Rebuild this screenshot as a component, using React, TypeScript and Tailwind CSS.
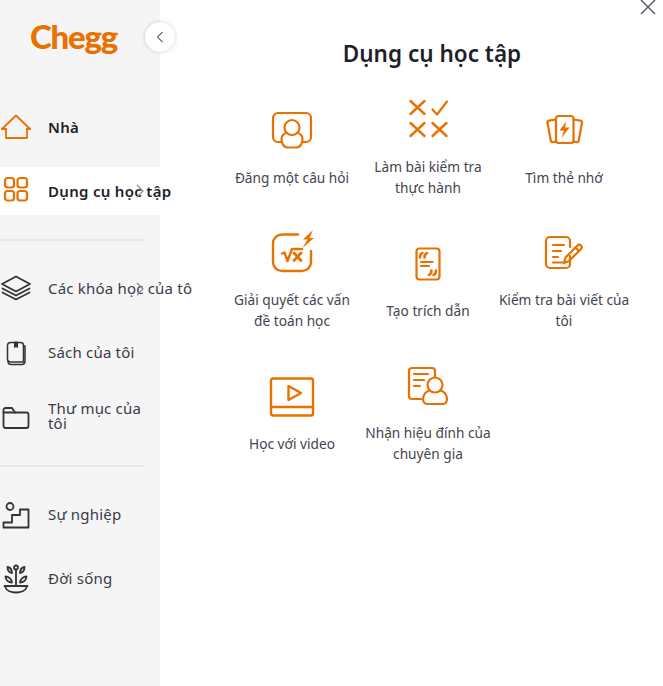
import React from "react";

const O = "#e87100";
const D = "#333333";

type SP = { children: React.ReactNode; c?: string };
const NavSvg = ({ children, c = D }: SP) => (
  <svg viewBox="0 0 32 32" width="32" height="32" fill="none" stroke={c} strokeWidth="1.8" strokeLinecap="round" strokeLinejoin="round" className="shrink-0">
    {children}
  </svg>
);
const BigSvg = ({ children }: { children: React.ReactNode }) => (
  <svg viewBox="0 0 48 40" width="48" height="40" fill="none" stroke={O} strokeWidth="2.2" strokeLinecap="round" strokeLinejoin="round" className="overflow-visible">
    {children}
  </svg>
);

const Chevron = () => (
  <svg width="8" height="14" viewBox="0 0 8 14" fill="none" stroke="#8a8a8a" strokeWidth="1.2" className="absolute left-[136px] top-1/2 -translate-y-1/2">
    <path d="M1 1l6 6-6 6" />
  </svg>
);

const navTop = [
  {
    label: "Nhà",
    bold: true,
    icon: (
      <NavSvg c={O}>
        <path d="M2 18 16 4.500 30 18" />
        <path d="M6 18v9h21v-9" />
        <path d="M2 18h4M27 18h3" />
      </NavSvg>
    ),
  },
  {
    label: "Dụng cụ học tập",
    bold: true,
    active: true,
    chevron: true,
    icon: (
      <NavSvg c={O}>
        <rect x="5" y="3" width="9" height="9.500" rx="2.500" strokeWidth="2.200" />
        <rect x="17.500" y="3" width="9.500" height="9.500" rx="2.500" strokeWidth="2.200" />
        <rect x="5" y="16" width="9" height="9.500" rx="2.500" strokeWidth="2.200" />
        <rect x="17.500" y="16" width="9.500" height="9.500" rx="2.500" strokeWidth="2.200" />
      </NavSvg>
    ),
  },
];

const navMid = [
  {
    label: "Các khóa học của tôi",
    chevron: true,
    nowrap: true,
    icon: (
      <NavSvg>
        <path d="M16 3.500 2 11 16 18.500 30 11z" />
        <path d="M2.500 15.500 16 22.500l13.500-7" />
        <path d="M2.500 19.500 16 26.500l13.500-7" />
      </NavSvg>
    ),
  },
  {
    label: "Sách của tôi",
    icon: (
      <NavSvg>
        <path d="M11 5.500h9.500a3 3 0 0 1 3 3V25H10.500a3 3 0 0 1-3-3V8.500a3 3 0 0 1 3.500-3z" strokeWidth="1.500" />
        <path d="M23.500 9h1.500v15.500a3 3 0 0 1-3 3H11a3 3 0 0 1-3-3" strokeWidth="1.500" />
        <path d="M14.500 5.500v5l1.500-1 1.500 1v-5z" fill={D} strokeWidth="1" />
      </NavSvg>
    ),
  },
  {
    label: "Thư mục của tôi",
    wrap: true,
    icon: (
      <NavSvg>
        <path d="M3.500 12V9a2 2 0 0 1 2-2h6.500l3 4.500h11.500a2 2 0 0 1 2 2V25a2 2 0 0 1-2 2H5.500a2 2 0 0 1-2-2z" />
        <path d="M3.500 11.500H15" />
      </NavSvg>
    ),
  },
];

const navBottom = [
  {
    label: "Sự nghiệp",
    icon: (
      <NavSvg>
        <circle cx="10" cy="7.500" r="3.500" />
        <path d="M3.500 28.500V23.500H12V16h8V10.500h8.500v18z" />
      </NavSvg>
    ),
  },
  {
    label: "Đời sống",
    icon: (
      <NavSvg>
        <circle cx="16" cy="4.500" r="2" />
        <path d="M16 7v15" />
        <path d="M7.500 4c2.500.5 4.500 3 4.500 6-2.500-.5-4.500-3-4.500-6zM24.500 4c-2.500.5-4.500 3-4.500 6 2.500-.5 4.500-3 4.500-6z" />
        <path d="M5.500 13.500c3 0 6 2.500 6.500 6-3.500 0-6.500-2.500-6.500-6zM26.500 13.500c-3 0-6 2.500-6.500 6 3.500 0 6.500-2.500 6.500-6z" />
        <path d="M4.500 23h23" />
        <path d="M5.500 24.500c1 3 5.500 5 10.500 5s9.500-2 10.500-5" />
      </NavSvg>
    ),
  },
];

type Nav = { label: string; icon: React.ReactNode; bold?: boolean; active?: boolean; chevron?: boolean; nowrap?: boolean; wrap?: boolean };

const NavRow = ({ item }: { item: Nav }) => (
  <div className={`relative flex h-12 w-[192px] items-center gap-4 overflow-hidden ${item.active ? "bg-white" : ""}`}>
    {item.icon}
    <span
      className={`leading-[15px] ${item.bold ? "text-[15px] tracking-[0.3px] font-semibold text-[#1f1f2b]" : "pb-0.5 text-[15px] tracking-[0.2px] text-[#3a3a48]"} ${item.nowrap ? "whitespace-nowrap" : ""} ${item.wrap ? "w-[100px]" : ""}`}
    >
      {item.label}
    </span>
    {item.chevron ? <Chevron /> : null}
  </div>
);

const tools = [
  {
    label: "Đăng một câu hỏi",
    icon: (
      <BigSvg>
        <path d="M14 31H10a5 5 0 0 1-5-5V7a5 5 0 0 1 5-5h28a5 5 0 0 1 5 5v19a5 5 0 0 1-5 5h-4" />
        <circle cx="24" cy="16.500" r="7.500" />
        <path d="M18 22c-3 1-4.500 3.500-4.500 6.500 0 4 2.500 8 6 8h9c3.500 0 6-4 6-8 0-3-1.500-5.500-4.500-6.500" />
      </BigSvg>
    ),
  },
  {
    label: "Làm bài kiểm tra thực hành",
    two: true,
    icon: (
      <BigSvg>
        <g strokeWidth="2.400">
          <path d="M6.500 1l14 13M20.500 1l-14 13" />
          <path d="M28.500 9.500l4.500 5L43 1.500" strokeWidth="2.200" />
          <path d="M6.500 23l14 13M20.500 23l-14 13" />
          <path d="M28.500 23l14 13M42.500 23l-14 13" />
        </g>
      </BigSvg>
    ),
  },
  {
    label: "Tìm thẻ nhớ",
    icon: (
      <BigSvg>
        <rect x="16" y="5" width="17.500" height="27" rx="2.500" />
        <path d="M16 8.500l-7 1.200c-1 .2-1.700 1-1.500 2l3.300 18c.2 1 1.200 1.700 2.200 1.500l3-.5" />
        <path d="M33.500 8.500l7 1.200c1 .2 1.700 1 1.500 2l-3.300 18c-.2 1-1.200 1.700-2.200 1.500l-3-.5" />
        <path d="M26.500 10l-7 9.500h4.500l-2.500 7.500 8-10.500h-4.500l1.500-6.500z" fill={O} stroke="none" />
      </BigSvg>
    ),
  },
  {
    label: "Giải quyết các vấn đề toán học",
    two: true,
    icon: (
      <BigSvg>
        <path d="M30 1.500H14a9 9 0 0 0-9 9V29a9 9 0 0 0 9 9h20a9 9 0 0 0 9-9V18" strokeWidth="2.400" />
        <path d="M14 20.500l2.500-1 3 8.500 4.500-12h10" strokeWidth="2.400" />
        <path d="M26 20l7 7.500M33 20l-7 7.500" strokeWidth="2.800" />
        <path d="M45 -3 35 6.500h4.500L34.500 15 46 5h-4.500L45 -3z" fill={O} stroke="none" />
      </BigSvg>
    ),
  },
  {
    label: "Tạo trích dẫn",
    icon: (
      <BigSvg>
        <rect x="12.500" y="4.500" width="23" height="31" rx="3" />
        <path d="M16 13.500c0-2 .8-3.700 2.400-4.500M20.500 13.500c0-2 .8-3.700 2.400-4.500" strokeWidth="2.600" />
        <path d="M17 18h11.500M17 22h8" />
        <path d="M25 31c1.600-.8 2.400-2.500 2.400-4.500M29.500 31c1.600-.8 2.400-2.500 2.400-4.500" strokeWidth="2.600" />
      </BigSvg>
    ),
  },
  {
    label: "Kiểm tra bài viết của tôi",
    two: true,
    icon: (
      <BigSvg>
        <path d="M30 23v8a4 4 0 0 1-4 4H10a4 4 0 0 1-4-4V8a4 4 0 0 1 4-4h16a4 4 0 0 1 4 4v6" />
        <path d="M13 12h11M13 18h8M13 24h5M13 29.500h10" />
        <path d="M24 30l1.500-5.500 12-12c1-1 2.500-1 3.500 0s1 2.500 0 3.500l-12 12z" />
        <path d="M35.500 14.500l3.500 3.500" />
      </BigSvg>
    ),
  },
  {
    label: "Học với video",
    icon: (
      <BigSvg>
        <rect x="3" y="1.500" width="42" height="37" rx="2" strokeWidth="2.400" />
        <path d="M3 30h42" strokeWidth="2.400" />
        <path d="M20.500 9l12.500 7-12.500 7z" strokeWidth="2.400" />
      </BigSvg>
    ),
  },
  {
    label: "Nhận hiệu đính của chuyên gia",
    two: true,
    icon: (
      <BigSvg>
        <path d="M31 11V5a3 3 0 0 0-3-3H8a3 3 0 0 0-3 3v25a3 3 0 0 0 3 3h9" />
        <path d="M10 8h14M10 14h10M10 20h6" />
        <circle cx="31" cy="19" r="7.500" />
        <path d="M25.500 24.500c-3.500 1-6 4-6.500 8-.3 3 1.500 5.500 4 5.500h16c2.500 0 4.300-2.500 4-5.500-.5-4-3-7-6.500-8" />
      </BigSvg>
    ),
  },
];

export default function App() {
  return (
    <div
      className="relative flex h-[686px] w-[663px] overflow-hidden bg-white"
      style={{ fontFamily: '"Noto Sans", "Open Sans", sans-serif' }}
    >
      <aside className="w-[160px] shrink-0 bg-[#f5f5f5]">
        <div className="flex h-[103px] items-start pl-[30px] pt-[13px]">
          <span
            className="text-[33px] leading-[46px] font-black tracking-[-1.2px] text-[#e87100]"
            style={{ fontFamily: 'Lato, "Liberation Sans", sans-serif' }}
          >
            Chegg
          </span>
        </div>
        <nav className="flex flex-col gap-4">
          {navTop.map((n) => (
            <NavRow key={n.label} item={n} />
          ))}
          <div className="my-2 h-0.5 w-[144px] bg-[#e7e7e7]" />
          {navMid.map((n) => (
            <NavRow key={n.label} item={n} />
          ))}
          <div className="my-2 h-0.5 w-[144px] bg-[#e7e7e7]" />
          {navBottom.map((n) => (
            <NavRow key={n.label} item={n} />
          ))}
        </nav>
      </aside>

      <button className="absolute left-[145px] top-[22px] flex h-[30px] w-[30px] items-center justify-center rounded-full bg-white shadow-[0_0_4px_rgba(0,0,0,0.18)]">
        <svg width="8" height="12" viewBox="0 0 8 12" fill="none" stroke="#6f6f80" strokeWidth="1.200">
          <path d="M6.500 1 1.500 6l5 5" />
        </svg>
      </button>

      <button className="absolute left-[640px] top-[-1px]">
        <svg width="16" height="16" viewBox="0 0 16 16" fill="none" stroke="#5d5b73" strokeWidth="1.500" className="block">
          <path d="M1 15 15 1M1 1l14 14" />
        </svg>
      </button>

      <main className="ml-16 w-[408px] shrink-0">
        <h1 className="flex h-[83px] items-start justify-center pl-2 pt-[39px] text-[22.5px] leading-[30px] font-semibold text-[#1f1f2b]">
          Dụng cụ học tập
        </h1>
        <div className="grid grid-cols-[136px_136px_136px] auto-rows-[133px]">
          {tools.map((t) => (
            <div key={t.label} className={`flex flex-col items-center justify-center gap-4 ${t.two ? "pb-0.5" : ""}`}>
              {t.icon}
              <p className="w-[132px] text-center text-[13.7px] leading-[21px] text-[#44444f]">{t.label}</p>
            </div>
          ))}
        </div>
      </main>
    </div>
  );
}
